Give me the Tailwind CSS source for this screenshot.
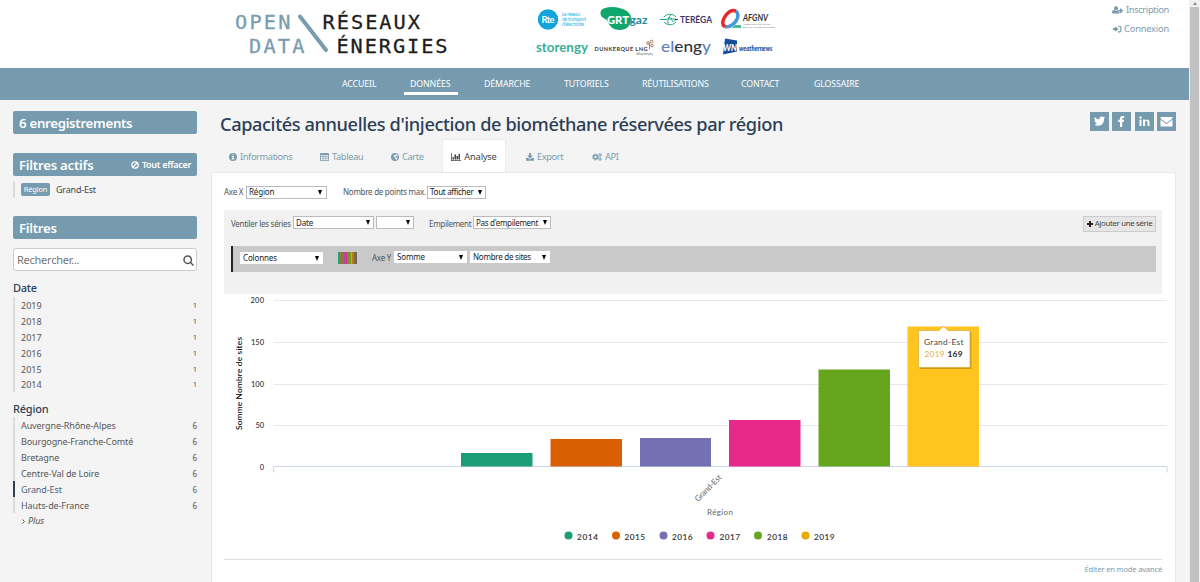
<!DOCTYPE html>
<html lang="fr">
<head>
<meta charset="utf-8">
<title>Open Data Réseaux Énergies</title>
<script src="https://cdn.jsdelivr.net/npm/@tailwindcss/browser@4"></script>
</head>
<body class="w-[1200px] h-[582px] overflow-hidden flex bg-[#f4f4f4] font-['Noto_Sans','Open_Sans',sans-serif] text-[#565656] text-[9px] whitespace-nowrap">
<svg class="hidden">
  <symbol id="userplus" viewBox="0 0 22 16"><circle cx="8" cy="4.5" r="4"/><path d="M0 13.500q0-5.500 4-5.500 4 2.500 8 0 1.500 0 2.500 1.500h-2v3h3V15H2Q0 15 0 13.500ZM16 5h3v3h3v3h-3v3h-3v-3h-3V8h3Z"/></symbol>
  <symbol id="signin" viewBox="0 0 16 14"><path d="M0 5h4V2l6 5-6 5V9H0Z"/><path d="M9 1h3a3 3 0 0 1 3 3v6a3 3 0 0 1-3 3H9v-2h3q1 0 1-1V4q0-1-1-1H9Z"/></symbol>
  <symbol id="info" viewBox="0 0 16 16"><path fill-rule="evenodd" d="M8 0a8 8 0 1 0 0 16A8 8 0 0 0 8 0ZM6.700 2.500h2.600v2.200H6.700ZM5.500 6.200h3.800v5h1.300v1.900H5.500v-1.900h1.200V8.100H5.500Z"/></symbol>
  <symbol id="table" viewBox="0 0 18 16"><path fill-rule="evenodd" d="M1.500 0h15Q18 0 18 1.500v13q0 1.500-1.500 1.500h-15Q0 16 0 14.500v-13Q0 0 1.500 0ZM1.500 4v2.600h4V4Zm5.300 0v2.600h4.400V4Zm5.700 0v2.600h4V4Zm-11 3.900v2.500h4V7.900Zm5.300 0v2.500h4.400V7.900Zm5.700 0v2.500h4V7.900Zm-11 3.800v2.800h4v-2.800Zm5.300 0v2.800h4.400v-2.800Zm5.700 0v2.800h4v-2.800Z"/></symbol>
  <symbol id="globe" viewBox="0 0 16 16"><path fill-rule="evenodd" d="M8 0a8 8 0 1 0 0 16A8 8 0 0 0 8 0ZM9 1.800l3 1.400 2 3.300-1.500.5-1.500-1.500-2 .5-.5 2 2 1 2.500.5-.5 2.500-2.500 2.300-1-3-2-2 .5-1.500L4 6l2-1.500 2.500-.5Z"/></symbol>
  <symbol id="bars" viewBox="0 0 20 16"><path d="M0 0h1.500v14.500H20V16H0ZM3 8.500h3V13H3ZM7 3h3v10H7Zm4 3h3v7h-3Zm4-4.500h3V13h-3Z"/></symbol>
  <symbol id="dl" viewBox="0 0 16 16"><path d="M6 0h4v5h4l-6 6-6-6h4ZM0 10h4.500L8 13.200 11.500 10H16v5.500H0Z"/></symbol>
  <symbol id="cogs" viewBox="0 0 20 16"><g fill="none" stroke="currentColor"><circle cx="7" cy="8" r="3.800" stroke-width="3"/><circle cx="7" cy="8" r="6" stroke-width="2" stroke-dasharray="2.400 2.310"/><circle cx="16" cy="3.800" r="2" stroke-width="1.800"/><circle cx="16" cy="3.800" r="3.300" stroke-width="1.200" stroke-dasharray="1.500 1.460"/><circle cx="16" cy="12.200" r="2" stroke-width="1.800"/><circle cx="16" cy="12.200" r="3.300" stroke-width="1.200" stroke-dasharray="1.500 1.460"/></g></symbol>
</svg>

<div class="w-[1189px] h-full flex flex-col">
  <header class="h-[68px] bg-white flex shrink-0">
    <svg class="w-[1100px] h-[68px] shrink-0" viewBox="0 0 1100 68">
      <g font-family="'DejaVu Sans Mono', monospace" font-size="20.300" stroke-width=".3">
        <g fill="#7a9caf" stroke="#7a9caf"><text x="235" y="29.300" textLength="55.500">OPEN</text><text x="249" y="52.500" textLength="55.500">DATA</text></g>
        <g fill="#1d1d1b" stroke="#1d1d1b"><text x="322.500" y="29.300" textLength="97.500">RÉSEAUX</text><text x="336.500" y="52.500" textLength="111">ÉNERGIES</text></g>
      </g>
      <path d="M300 16.500 326 50" stroke="#7a9caf" stroke-width="4" stroke-linecap="round"/>
      <circle cx="548" cy="19.500" r="10.200" fill="#12a5dc"/>
      <text x="541.500" y="23" fill="#fff" font-family="Lato" font-weight="bold" font-size="9.500" textLength="13">Rte</text>
      <g fill="#35b6e2" font-family="Lato" font-size="5"><text x="562" y="16" textLength="18">Le réseau</text><text x="562" y="21" textLength="24">de transport</text><text x="562" y="26" textLength="22">d’électricité</text></g>
      <path d="M600.500 12q1-5 13-5 17 2 17.500 11 0 12-12 12-9-1-11-8-1-2.500-4.500-4-3.500-2-3-6Z" fill="#0fa66c"/>
      <text x="607" y="24" font-family="Lato" font-weight="900" font-size="12" fill="#fff" textLength="22" lengthAdjust="spacingAndGlyphs">GRT</text>
      <text x="629.500" y="24" font-family="Lato" font-weight="bold" font-size="11.500" fill="#1d8aa0" textLength="18" lengthAdjust="spacingAndGlyphs">gaz</text>
      <g fill="none" stroke="#29a584"><path d="M664 17a7 5.500 0 0 1 12 0M664 22a7 5.500 0 0 0 12 0M660 19.500h7q3-4 4.500 0t4.500 0"/><path d="M668 24q-1-7 4-10M668 19h8" /></g><path d="M675 19.500h3" stroke="#3c2e6e"/>
      <text x="680" y="23" font-family="Lato" font-weight="bold" font-size="9" fill="#43366e" textLength="32" lengthAdjust="spacingAndGlyphs">TERĒGA</text>
      <g fill="none" stroke-width="3.500"><path d="M725 27q7 0 11-6 4-6 0-10" stroke="#4399d4"/><path d="M725 27q-5-4 1-12 5-6 10-4" stroke="#e5282c"/></g>
      <path d="M735 25h6v3h-9z" fill="#47b795"/>
      <text x="743" y="21" font-family="Lato" font-style="italic" font-weight="bold" font-size="8.500" fill="#333" textLength="25" lengthAdjust="spacingAndGlyphs">AFGNV</text>
      <g font-family="Lato" font-size="2.500" fill="#777"><text x="743" y="24.500" textLength="27">ASSOCIATION FRANÇAISE</text><text x="743" y="27.500" textLength="32">DU GAZ NATUREL VÉHICULES</text></g>
      <text x="536" y="51.500" font-family="Lato" font-weight="bold" font-size="13" fill="#3cae96" textLength="52" lengthAdjust="spacingAndGlyphs">storengy</text>
      <text x="594.500" y="51" font-family="Lato" font-weight="bold" font-size="5.600" fill="#3b3735" textLength="53">DUNKERQUE LNG</text>
      <g fill="none" stroke="#a97860"><circle cx="648" cy="43" r="1.300"/><circle cx="651.500" cy="41.500" r="1.300"/><circle cx="652" cy="45.500" r="1.300"/><path d="M649.500 43v6"/></g>
      <text x="636" y="54.500" font-family="Lato" font-size="3" fill="#888" textLength="17">A Fluxys company</text>
      <g font-family="Lato" font-weight="500" font-size="15.500"><text x="661" y="52" fill="#6480c0" textLength="50" lengthAdjust="spacingAndGlyphs">el<tspan fill="#32343c">eng</tspan>y</text></g>
      <path d="m725 38.500 12 2v11l-14 3z" fill="#164d9c"/><text x="723" y="51" fill="#fff" font-family="Lato" font-style="italic" font-weight="900" font-size="9" textLength="14" lengthAdjust="spacingAndGlyphs">WN</text>
      <text x="739" y="51" font-family="Lato" font-style="italic" font-weight="900" font-size="6.500" fill="#1c4d96" textLength="33.500" lengthAdjust="spacingAndGlyphs">weathernews</text>
    </svg>
    <div class="w-[69px] flex flex-col items-end text-[9.3px] tracking-[-0.35px] leading-[19px] text-[#7a9caf]">
      <a class="flex items-center gap-[3px] h-[19px]"><svg class="w-[11px] h-[8px] fill-[#7599ac]"><use href="#userplus"/></svg>Inscription</a>
      <a class="flex items-center gap-[2px] h-[19px]"><svg class="w-[9px] h-[8px] fill-[#7599ac]"><use href="#signin"/></svg><span class="tracking-[-0.2px]">Connexion</span></a>
    </div>
  </header>
  <nav class="h-[32px] bg-[#769aae] text-white shrink-0 flex pl-[342px] text-[8.8px] tracking-[-0.12px] leading-[32px]">
    <a class="w-[62px]">ACCUEIL</a>
    <a class="w-[80px]"><span class="block h-[27px] border-b-[3px] border-white w-[54px] px-[6px]">DONNÉES</span></a>
    <a class="w-[80px]">DÉMARCHE</a>
    <a class="w-[78px]">TUTORIELS</a>
    <a class="w-[99px]">RÉUTILISATIONS</a>
    <a class="w-[73px]">CONTACT</a>
    <a>GLOSSAIRE</a>
  </nav>
  <div class="flex-1 flex min-h-0">
    <aside class="w-[197px] pl-[13px] pt-[11px] shrink-0">
      <h2 class="h-[23px] bg-[#769aae] text-white rounded-[2px] px-[6px] text-[13.2px] leading-[24px] font-semibold tracking-[-0.27px]">6 enregistrements</h2>
      <div class="mt-[19px] h-[23px] bg-[#769aae] text-white rounded-[2px] px-[6px] flex justify-between leading-[24px] font-semibold"><h2 class="text-[13.2px] tracking-[-0.24px]">Filtres actifs</h2>
        <span class="flex items-center gap-[3px] text-[9px] tracking-[-0.3px]"><svg class="w-[8px] h-[8px]" viewBox="0 0 8 8" fill="none" stroke="white" stroke-width="1.300"><circle cx="4" cy="4" r="3.200"/><path d="M1.800 6.200 6.200 1.800"/></svg>Tout effacer</span></div>
      <div class="mt-[5px] h-[17px] border-l-2 border-[#dcdcdc] pl-[6px] flex items-center"><span class="bg-[#769aae] text-white rounded-[2px] h-[13px] w-[29px] text-center text-[7.5px] leading-[13px] tracking-[-0.2px]">Région</span><span class="ml-[6px] pt-px text-[9px] tracking-[-0.2px] text-[#444]">Grand-Est</span></div>
      <h2 class="mt-[18px] h-[23px] bg-[#769aae] text-white rounded-[2px] px-[6px] text-[13.2px] leading-[24px] font-semibold tracking-[-0.27px]">Filtres</h2>
      <div class="mt-[9px] h-[23px] bg-white border border-[#ccc] rounded-[3px] pl-[3px] pr-[2px] pt-px flex items-center justify-between text-[#757575] text-[11px] tracking-[-0.25px]">Rechercher...<svg class="w-[11px] h-[11px]" viewBox="0 0 11 11" fill="none" stroke="#555" stroke-width="1.500"><circle cx="4.700" cy="4.700" r="3.700"/><path d="m7.500 7.500 3 3"/></svg></div>
      <h3 class="mt-[8px] h-[18px] leading-[18px] text-[11px] font-medium text-[#2c3f56] tracking-[-0.3px]">Date</h3>
      <ul class="leading-[17.400px] [&>li]:h-[15.9px] [&>li]:flex [&>li]:justify-between [&>li]:border-l-2 [&>li]:border-[#dcdcdc] [&>li]:pl-[6px]">
        <li>2019<span class="text-[7.5px]">1</span></li><li>2018<span class="text-[7.5px]">1</span></li><li>2017<span class="text-[7.5px]">1</span></li><li>2016<span class="text-[7.5px]">1</span></li><li>2015<span class="text-[7.5px]">1</span></li><li>2014<span class="text-[7.5px]">1</span></li>
      </ul>
      <h3 class="mt-[7px] h-[18px] leading-[19px] text-[11px] font-medium text-[#2c3f56] tracking-[-0.2px]">Région</h3>
      <ul class="leading-[17.900px] tracking-[-0.1px] [&>li]:h-[15.9px] [&>li]:flex [&>li]:justify-between [&>li]:border-l-2 [&>li]:pl-[6px]">
        <li class="border-[#dcdcdc]">Auvergne-Rhône-Alpes<span class="text-[8px]">6</span></li><li class="border-[#dcdcdc] tracking-[-0.13px]">Bourgogne-Franche-Comté<span class="text-[8px]">6</span></li><li class="border-[#dcdcdc]">Bretagne<span class="text-[8px]">6</span></li><li class="border-[#dcdcdc]">Centre-Val de Loire<span class="text-[8px]">6</span></li><li class="border-[#2c3f56] text-[#4b647c]">Grand-Est<span class="text-[8px]">6</span></li><li class="border-[#dcdcdc]">Hauts-de-France<span class="text-[8px]">6</span></li>
      </ul>
      <div class="pl-[9px] pt-px flex items-center gap-[3px] h-[16px] italic tracking-[-0.1px]"><svg class="w-[3px] h-[5px]" viewBox="0 0 3 5" fill="none" stroke="#555"><path d="m.5.5 2 2-2 2"/></svg>Plus</div>
    </aside>
    <main class="ml-[14px] w-[965px] flex flex-col">
      <div class="h-[39px] pl-[9px] flex shrink-0">
        <h1 class="w-[870px] text-[18.2px] leading-[48px] font-medium text-[#2c3f56] tracking-[-0.39px]">Capacités annuelles d'injection de biométhane réservées par région</h1>
        <div class="flex gap-[3.5px] pt-[12px] [&>svg]:w-[19px] [&>svg]:h-[19px] [&>svg]:shrink-0">
          <svg viewBox="0 0 19 19"><path fill="#769aae" d="M0 0h19v19H0z"/><path fill="#fff" d="M4.500 5q2 2.300 5 2.400-.2-3 2.300-3 1 0 1.700.7l1.400-.5-.9 1.300 1.200-.3-1.100 1.100q0 6.500-6.200 7-2.200 0-3.900-1 1.900 0 3.100-1-1.500-.2-2-1.500h.9q-1.500-.6-1.600-2.200l.8.300Q4 7 4.500 5Z"/></svg>
          <svg viewBox="0 0 19 19"><path fill="#769aae" d="M0 0h19v19H0z"/><path fill="#fff" d="M8 15V10H6.300V7.700H8V6.200Q8 4 10.400 4h1.700v2h-1q-.9 0-.9.900v.8H12L11.700 10h-1.500v5Z"/></svg>
          <svg viewBox="0 0 19 19"><path fill="#769aae" d="M0 0h19v19H0z"/><g fill="#fff"><circle cx="5.500" cy="5.400" r="1.200"/><path d="M4.500 7.500h2V14h-2ZM8 7.500h2v.9q2.300-2 4 0 .5.700.5 1.800V14h-2v-3.500q0-1.400-1.200-1.400T10 10.500V14H8Z"/></g></svg>
          <svg viewBox="0 0 19 19"><path fill="#769aae" d="M0 0h19v19H0z"/><path fill="#fff" d="M4 5h11q.5 0 .5.500v1L9.500 11l-6-4.500v-1Q3.500 5 4 5ZM3.500 7.700l6 4.300 6-4.300V14q0 .5-.5.500H4q-.5 0-.5-.5Z"/></svg>
        </div>
      </div>
      <div class="h-[33px] flex shrink-0 pl-[18px] text-[#7a9caf] text-[9.3px] tracking-[-0.4px] [&>a]:flex [&>a]:items-center [&>a]:pt-[2px] [&>a]:gap-[3px] [&_svg]:h-[8px] [&_svg]:fill-current">
        <a class="w-[91px]"><svg class="w-[8px]"><use href="#info"/></svg>Informations</a>
        <a class="w-[71px]"><svg class="w-[9px]"><use href="#table"/></svg>Tableau</a>
        <a class="w-[51px]"><svg class="w-[8px]"><use href="#globe"/></svg>Carte</a>
        <a class="w-[64px] justify-center bg-white text-[#444] border border-b-0 border-[#ececec] tracking-[-0.2px]"><svg class="w-[10px]"><use href="#bars"/></svg>Analyse</a>
        <a class="w-[86px] pl-[20px]"><svg class="w-[8px]"><use href="#dl"/></svg>Export</a>
        <a><svg class="w-[10px]"><use href="#cogs"/></svg>API</a>
      </div>
      <section class="flex-1 bg-white border border-b-0 border-[#e8e8e8] pl-[12px] text-[8px] tracking-[-0.15px] text-[#555]">
        <div class="h-[37px] pt-[1px] flex items-center">
          <span class="w-[22px] tracking-[-0.25px]">Axe X</span>
          <span class="w-[81px] h-[13px] border border-[#bbb] px-[2px] flex justify-between items-center text-[#222]">Région<i class="border-x-[2px] border-t-[5px] border-x-transparent border-t-black mr-[2px]"></i></span>
          <span class="ml-[16px] w-[84px] tracking-[-0.27px]">Nombre de points max.</span>
          <span class="w-[59px] h-[13px] border border-[#bbb] px-[2px] flex justify-between items-center text-[#222] tracking-[-0.3px]">Tout afficher<i class="border-x-[2px] border-t-[5px] border-x-transparent border-t-black mr-[1px]"></i></span>
        </div>
        <div class="w-[938px] h-[84px] bg-[#f1f1f1] pl-[7px] pr-[6px]">
          <div class="h-[36px] flex pt-[6px]">
            <span class="w-[62px] leading-[15px] tracking-[-0.3px]">Ventiler les séries</span>
            <span class="w-[81px] h-[13px] bg-white border border-[#bbb] px-[2px] flex justify-between items-center text-[#222]">Date<i class="border-x-[2px] border-t-[5px] border-x-transparent border-t-black mr-[1px]"></i></span>
            <span class="ml-[2px] w-[38px] h-[13px] bg-white border border-[#bbb] px-[2px] flex justify-end items-center"><i class="border-x-[2px] border-t-[5px] border-x-transparent border-t-black mr-[1px]"></i></span>
            <span class="ml-[15px] w-[44px] leading-[15px] tracking-[-0.3px]">Empilement</span>
            <span class="w-[78px] h-[13px] bg-white border border-[#bbb] px-[2px] flex justify-between items-center text-[#222] tracking-[-0.3px]">Pas d'empilement<i class="border-x-[2px] border-t-[5px] border-x-transparent border-t-black mr-[1px]"></i></span>
            <span class="ml-auto w-[73px] h-[16px] bg-[#e6e6e6] border border-[#ccc] flex items-center justify-center gap-[2px] text-[7.8px] tracking-[-0.3px] text-[#444]"><svg class="w-[6px] h-[6px]" viewBox="0 0 6 6"><path d="M2 0h2v2h2v2H4v2H2V4H0V2h2Z" fill="#222"/></svg>Ajouter une série</span>
          </div>
          <div class="h-[26px] bg-[#c9c9c9] border-l-2 border-[#222] pl-[7px] flex pt-[5px]">
            <span class="mt-[1px] w-[83px] h-[12px] bg-white px-[3px] flex justify-between items-center text-[#222]">Colonnes<i class="border-x-[2px] border-t-[5px] border-x-transparent border-t-black mr-[1px]"></i></span>
            <span class="ml-[15px] mt-[1px] w-[19px] h-[12px] flex [&>b]:flex-1"><b class="bg-[#27a278]"></b><b class="bg-[#8a7d3a]"></b><b class="bg-[#a06d43]"></b><b class="bg-[#8e6d86]"></b><b class="bg-[#ad4ca3]"></b><b class="bg-[#d5358f]"></b><b class="bg-[#85872f]"></b><b class="bg-[#72a11f]"></b><b class="bg-[#d9a50d]"></b><b class="bg-[#b57c18]"></b><b class="bg-[#936a2d]"></b><b class="bg-[#666]"></b></span>
            <span class="ml-[15px] w-[22px] leading-[13px] tracking-[-0.25px]">Axe Y</span>
            <span class="w-[73px] h-[12px] bg-white px-[3px] flex justify-between items-center text-[#222]">Somme<i class="border-x-[2px] border-t-[5px] border-x-transparent border-t-black mr-[1px]"></i></span>
            <span class="ml-[3px] w-[80px] h-[12px] bg-white px-[3px] flex justify-between items-center text-[#222] tracking-[-0.25px]">Nombre de sites<i class="border-x-[2px] border-t-[5px] border-x-transparent border-t-black mr-[1px]"></i></span>
          </div>
        </div>
        <svg class="w-[950px] h-[265px] block tracking-normal" viewBox="224 294 950 265" font-family="Lato, sans-serif">
          <path d="M273.500 300.500H1167M273.500 342.500H1167M273.500 384.500H1167M273.500 425.500H1167" stroke="#e8e8e8" fill="none"/>
          <path d="M273.500 472.500v-6H1167v6" stroke="#ccd6eb" fill="none"/>
          <path d="M461 453h71.500v13.500H461z" fill="#1b9e77"/><path d="M550.500 439H622v27.500h-71.500z" fill="#d95f02"/><path d="M640 438h71v28.500h-71z" fill="#7570b3"/><path d="M729 420h71.500v46.500H729z" fill="#e7298a"/><path d="M818.500 369.500H890v97h-71.500z" fill="#66a61e"/><path d="M907.500 326.500H979v140h-71.500z" fill="#ffc41d"/>
          <g font-size="7.500" fill="#333" text-anchor="end" font-weight="500"><text x="264" y="303" textLength="13.500">200</text><text x="264" y="345" textLength="13">150</text><text x="264" y="387" textLength="13">100</text><text x="264" y="428" textLength="8.500">50</text><text x="264" y="469.500" textLength="4.500">0</text></g>
          <text transform="translate(242 430) rotate(-90)" font-size="8.300" font-weight="500" fill="#000" textLength="93">Somme Nombre de sites</text>
          <text transform="translate(698 502) rotate(-45)" font-size="8" fill="#666" textLength="34">Grand-Est</text>
          <text x="707" y="515" font-size="8" fill="#666" textLength="26">Région</text>
          <g fill="#1b9e77"><circle cx="568.500" cy="535.500" r="4"/><circle cx="616" cy="535.500" r="4" fill="#d95f02"/><circle cx="663.500" cy="535.500" r="4" fill="#7570b3"/><circle cx="710.500" cy="535.500" r="4" fill="#e7298a"/><circle cx="758" cy="535.500" r="4" fill="#66a61e"/><circle cx="805.500" cy="535.500" r="4" fill="#e6ab02"/></g>
          <g font-size="8.300" font-weight="600" fill="#333"><text x="577" y="539.500" textLength="21">2014</text><text x="624.500" y="539.500" textLength="20.500">2015</text><text x="672" y="539.500" textLength="20.500">2016</text><text x="719.500" y="539.500" textLength="20.500">2017</text><text x="767" y="539.500" textLength="20.500">2018</text><text x="814" y="539.500" textLength="20.500">2019</text></g>
          <path d="M919.500 332h52v37h-52z" fill="#000" opacity=".2"/>
          <path d="M918.500 330.500H939l4.500-4.500 4.500 4.500h22v37h-51.500z" fill="#fff" stroke="#d9ad3a" stroke-width=".8"/>
          <g font-size="8.300"><text x="924" y="345" fill="#444" textLength="39.500">Grand-Est</text><text x="924.500" y="357" fill="#e9b44a" font-weight="500" textLength="20">2019</text><text x="947.500" y="357" fill="#222" font-weight="bold" textLength="15">169</text></g>
        </svg>
        <div class="w-[938px] h-[22px] border-t border-[#e0e0e0] text-right leading-[18px] text-[7.5px] text-[#7a9caf]">Éditer en mode avancé</div>
      </section>
    </main>
  </div>
</div>
<div class="w-[11px] bg-[#f1f1f1] px-[1px] flex flex-col items-center"><i class="my-[2px] border-x-[2.500px] border-b-[3px] border-x-transparent border-b-[#888]"></i><div class="w-[9px] flex-1 bg-[#c1c1c1]"></div></div>
</body>
</html>
